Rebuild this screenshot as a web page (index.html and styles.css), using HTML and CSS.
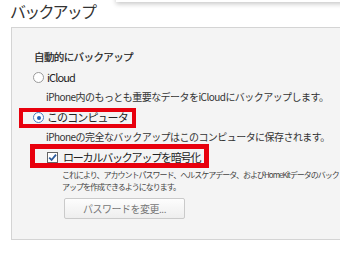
FILE: index.html
```html
<!DOCTYPE html>
<html lang="ja">
<head>
    <meta charset="UTF-8">
    <meta name="viewport" content="width=device-width, initial-scale=1.0">
    <title>バックアップ</title>
    <link rel="stylesheet" href="styles.css">
</head>
<body>
    <div class="popup-edge"></div>

    <h1 class="title">バックアップ</h1>

    <div class="panel">
        <div class="heading">自動的にバックアップ</div>

        <div class="option-row">
            <label class="option">
                <span class="radio"></span>
                <span>iCloud</span>
            </label>
        </div>
        <div class="desc">iPhone内のもっとも重要なデータをiCloudにバックアップします。</div>

        <div class="option-row">
            <label class="option marked mark-pc">
                <span class="radio checked"></span>
                <span>このコンピュータ</span>
            </label>
        </div>
        <div class="desc">iPhoneの完全なバックアップはこのコンピュータに保存されます。</div>

        <div class="sub">
            <div class="option-row">
                <label class="option check-option marked mark-enc">
                    <span class="checkbox">
                        <svg width="9" height="9" viewBox="0 0 9 9">
                            <path d="M1.2 4.6 L3.6 7 L8 1.6" fill="none" stroke="#2d5c9c" stroke-width="1.8"/>
                        </svg>
                    </span>
                    <span>ローカルバックアップを暗号化</span>
                </label>
            </div>
            <div class="note">
                <div>これにより、アカウントパスワード、ヘルスケアデータ、およびHomeKitデータのバック</div>
                <div>アップを作成できるようになります。</div>
            </div>
            <button class="btn">パスワードを変更...</button>
        </div>
    </div>
</body>
</html>
```

FILE: styles.css
```css
body {
    margin: 0;
    background: #fff;
    font-family: "Noto Sans CJK JP", "Noto Sans", sans-serif;
    color: #333;
    overflow: hidden;
}
.popup-edge {
    position: absolute;
    top: -10px;
    left: 116px;
    right: -20px;
    height: 12px;
    background: #fff;
    box-shadow: 0 2px 5px rgba(0, 0, 0, 0.22);
}
.title {
    margin: 0;
    padding-left: 10px;
    height: 27px;
    font-size: 16px;
    font-weight: normal;
    line-height: 22px;
    letter-spacing: -1.8px;
    color: #333;
}
.panel {
    margin-left: 11px;
    margin-right: -20px;
    padding: 19px 0 20px 22px;
    background: #f4f4f4;
    border: 1px solid #d4d4d4;
}
.heading {
    font-size: 10.5px;
    line-height: 20px;
    letter-spacing: -0.6px;
    color: #222;
    -webkit-text-stroke: 0.2px #222;
}
.option-row {
    height: 20px;
    padding-top: 1px;
    box-sizing: border-box;
}
.option {
    display: flex;
    width: fit-content;
    align-items: center;
    gap: 3px;
    margin-left: -1px;
    font-size: 11px;
    line-height: 19px;
    letter-spacing: -0.9px;
    color: #222;
}
.marked {
    position: relative;
}
.marked::before {
    content: "";
    position: absolute;
    border: 4px solid #e8000d;
}
.mark-pc::before {
    left: -14px;
    right: -8px;
    top: 0;
    bottom: -1px;
}
.mark-enc::before {
    left: -17px;
    right: -9px;
    top: -4px;
    bottom: -1px;
    border-width: 5px;
}
.radio {
    width: 9px;
    height: 9px;
    border: 1px solid #9a9a9a;
    border-radius: 50%;
    background: #fff;
    position: relative;
}
.radio.checked {
    border-color: #4c7cbd;
}
.radio.checked::after {
    content: "";
    position: absolute;
    left: 2.5px;
    top: 2.5px;
    width: 4px;
    height: 4px;
    border-radius: 50%;
    background: #1f5fb5;
}
.desc {
    padding-left: 12px;
    font-size: 10px;
    line-height: 20px;
    letter-spacing: -0.55px;
    color: #333;
    white-space: nowrap;
}
.sub {
    padding-left: 14px;
}
.checkbox {
    width: 9px;
    height: 9px;
    border: 1px solid #666;
    background: #fff;
    display: flex;
    align-items: center;
    justify-content: center;
}
.check-option {
    gap: 5px;
    letter-spacing: -1.2px;
}
.note {
    margin-top: 2px;
    padding-left: 14px;
    font-size: 8px;
    line-height: 12px;
    letter-spacing: -1px;
    color: #444;
    white-space: nowrap;
}
.btn {
    display: block;
    margin: 5px 0 0 16px;
    width: 121px;
    height: 21px;
    padding: 0;
    border: 1px solid #cacaca;
    border-radius: 2px;
    background: linear-gradient(#fdfdfd, #eeeeee);
    font-family: inherit;
    font-size: 10px;
    letter-spacing: -0.5px;
    color: #777;
}
```
